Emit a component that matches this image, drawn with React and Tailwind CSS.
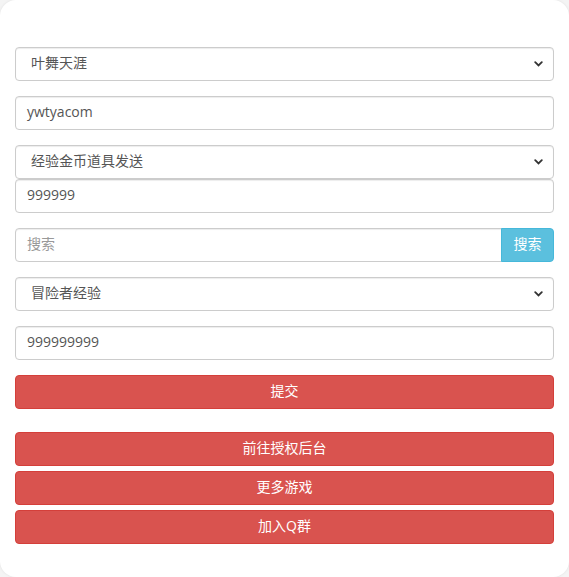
import React from "react";

const font = { fontFamily: '"Open Sans", "Noto Sans CJK SC", sans-serif' };

function Chevron() {
  return (
    <svg className="pointer-events-none absolute right-[10px] top-1/2 -translate-y-1/2" width="9" height="6" viewBox="0 0 9 6">
      <path d="M1.2 1.2 L4.5 4.5 L7.8 1.2" stroke="#333" strokeWidth="1.8" fill="none" strokeLinecap="round" />
    </svg>
  );
}

function Select({ value }) {
  return (
    <div className="relative h-[34px] rounded-[4px] border border-[#ccc] bg-white shadow-[inset_0_1px_1px_rgba(0,0,0,0.075)] flex items-center pl-[15px] pb-[3px] text-[14px] text-[#555]">
      {value}
      <Chevron />
    </div>
  );
}

function Input({ value, placeholder, className = "" }) {
  return (
    <div className={"h-[34px] rounded-[4px] border border-[#ccc] bg-white shadow-[inset_0_1px_1px_rgba(0,0,0,0.075)] flex items-center pl-[11px] pb-[3px] text-[14px] " + (value ? "text-[#555] " : "text-[#999] ") + className}>
      {value || placeholder}
    </div>
  );
}

function RedButton({ children }) {
  return (
    <div className="h-[34px] rounded-[4px] border border-[#d43f3a] bg-[#d9534f] flex items-center justify-center pb-[3px] text-[14px] text-white">
      {children}
    </div>
  );
}

export default function App() {
  return (
    <div className="w-[569px] h-[577px] bg-[#f4f4f4]" style={font}>
      <div className="w-full h-full rounded-[16px] bg-white shadow-[0_0_3px_rgba(0,0,0,0.08)] px-[15px] pt-[47px]">
        <Select value="叶舞天涯" />
        <div className="mt-[15px]"><Input value="ywtyacom" /></div>
        <div className="mt-[15px]"><Select value="经验金币道具发送" /></div>
        <Input value="999999" />
        <div className="mt-[15px] flex">
          <Input placeholder="搜索" className="flex-1 rounded-r-none" />
          <div className="w-[53px] h-[34px] rounded-r-[4px] border border-[#46b8da] bg-[#5bc0de] text-white text-[14px] flex items-center justify-center pb-[3px] -ml-px">搜索</div>
        </div>
        <div className="mt-[15px]"><Select value="冒险者经验" /></div>
        <div className="mt-[15px]"><Input value="999999999" /></div>
        <div className="mt-[15px]"><RedButton>提交</RedButton></div>
        <div className="mt-[23px] flex flex-col gap-[5px]">
          <RedButton>前往授权后台</RedButton>
          <RedButton>更多游戏</RedButton>
          <RedButton>加入Q群</RedButton>
        </div>
      </div>
    </div>
  );
}
